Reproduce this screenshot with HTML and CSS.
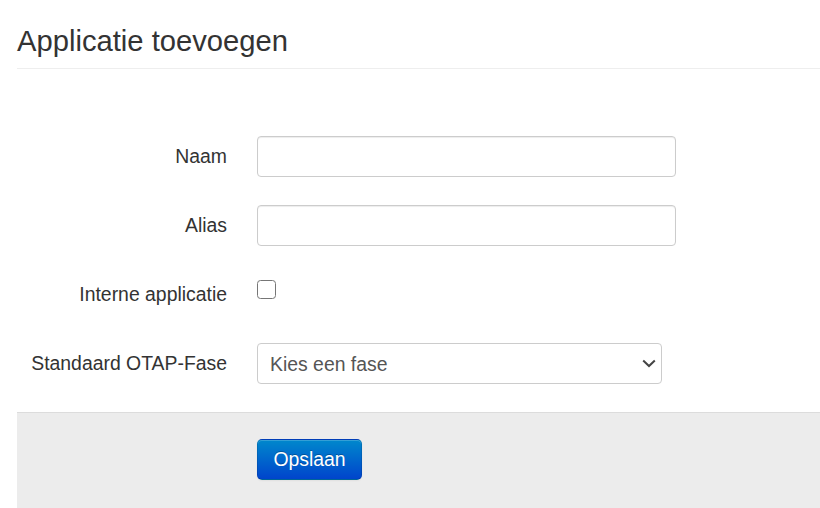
FILE: index.html
```html
<!DOCTYPE html>
<html lang="nl">
<head>
<meta charset="utf-8">
<title>Applicatie toevoegen</title>
<link rel="stylesheet" href="styles.css">
</head>
<body>
<div class="page">
  <h1 class="page-title">Applicatie toevoegen</h1>
  <form class="form">
    <div class="fields">
      <label class="label" for="naam">Naam</label>
      <div class="control"><input id="naam" class="text-input" type="text"></div>

      <label class="label" for="alias">Alias</label>
      <div class="control"><input id="alias" class="text-input" type="text"></div>

      <label class="label" for="intern">Interne applicatie</label>
      <div class="control check-control"><input id="intern" class="checkbox" type="checkbox"></div>

      <label class="label" for="fase">Standaard OTAP-Fase</label>
      <div class="control">
        <div class="select-wrap">
          <select id="fase" class="select">
            <option>Kies een fase</option>
          </select>
          <svg class="chevron" width="14" height="9" viewBox="0 0 14 9"><path d="M1.2 1.5 L7 7 L12.8 1.5" fill="none" stroke="#444" stroke-width="2"/></svg>
        </div>
      </div>
    </div>
    <div class="actions">
      <button type="button" class="btn-primary">Opslaan</button>
    </div>
  </form>
</div>
</body>
</html>
```
FILE: styles.css
```css
html, body {
  margin: 0;
  padding: 0;
  background: #fff;
}
body {
  font-family: "Liberation Sans", Arial, Helvetica, sans-serif;
  color: #333;
  font-size: 19.4px;
}
.page {
  padding-left: 17px;
}
.page-title {
  margin: 0;
  padding-top: 24px;
  padding-bottom: 10px;
  font-size: 29.2px;
  line-height: 34px;
  font-weight: normal;
  color: #333;
  border-bottom: 1px solid #eee;
}
.form {
  margin: 67px 0 0 0;
}
.fields {
  display: grid;
  grid-template-columns: 210px 1fr;
  column-gap: 30px;
  row-gap: 28px;
}
.label {
  text-align: right;
  height: 41px;
  line-height: 41px;
  font-size: 19.4px;
  color: #333;
}
.control {
  height: 41px;
}
.text-input {
  box-sizing: border-box;
  width: 419px;
  height: 41px;
  margin: 0;
  border: 1px solid #ccc;
  border-radius: 4px;
  box-shadow: inset 0 1px 1px rgba(0,0,0,.075);
  font-family: inherit;
  font-size: 19.4px;
  padding: 0 12px;
  background: #fff;
}
.check-control {
  padding-top: 6px;
  box-sizing: border-box;
}
.checkbox {
  appearance: none;
  -webkit-appearance: none;
  box-sizing: border-box;
  width: 19px;
  height: 19px;
  margin: 0;
  border: 1.5px solid #767676;
  border-radius: 3.5px;
  background: #fff;
  display: block;
}
.select-wrap {
  position: relative;
  width: 405px;
  height: 41px;
}
.select {
  appearance: none;
  -webkit-appearance: none;
  box-sizing: border-box;
  width: 405px;
  height: 41px;
  margin: 0;
  border: 1px solid #ccc;
  border-radius: 4px;
  background: #fff;
  color: #555;
  font-family: inherit;
  font-size: 19.4px;
  padding: 0 12px;
}
.chevron {
  position: absolute;
  right: 6px;
  top: 16px;
  pointer-events: none;
}
.actions {
  margin-top: 28px;
  background: #ececec;
  border-top: 1px solid #dcdcdc;
  padding: 26px 0 28px 240px;
}
.btn-primary {
  box-sizing: border-box;
  height: 41px;
  width: 105px;
  padding: 0;
  border: 1px solid rgba(0,0,0,.1);
  border-bottom-color: rgba(0,0,0,.25);
  border-radius: 5px;
  background: linear-gradient(to bottom, #0088cc, #0044cc);
  color: #fff;
  font-family: inherit;
  font-size: 19.4px;
  text-shadow: 0 -1px 0 rgba(0,0,0,.25);
  box-shadow: inset 0 1px 0 rgba(255,255,255,.2), 0 1px 2px rgba(0,0,0,.05);
  cursor: pointer;
}
```
